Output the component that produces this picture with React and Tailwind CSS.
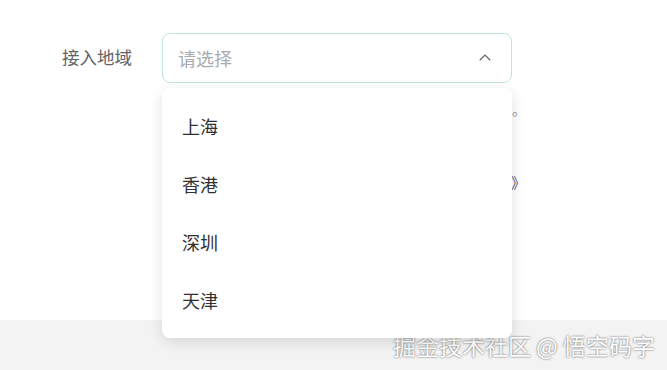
import { useState } from 'react';

const regions = ['上海', '香港', '深圳', '天津'];

function App() {
  const [open] = useState(true);

  return (
    <div
      className="relative flex h-[370px] w-[667px] flex-col overflow-hidden bg-white"
      style={{ fontFamily: '"Noto Sans CJK SC", "Liberation Sans", sans-serif' }}
    >
      {/* Form area */}
      <div className="flex-1 pt-[33px]">
        <div className="flex items-start">
          <label className="w-[132px] pt-[12px] text-right text-[17.5px] leading-[24px] text-[#606266]">
            接入地域
          </label>
          <div className="relative ml-[30px] w-[350px]">
            <div className="flex h-[50px] items-center justify-between rounded-[8px] border border-[#bfe6da] px-[15px]">
              <span className="text-[18px] text-[#a8abb2]">请选择</span>
              <svg className="mr-[2px] h-[18px] w-[18px] text-[#606266]" viewBox="0 0 24 24" fill="none" stroke="currentColor" strokeWidth={1.6}>
                <path d="M5 15l7-7 7 7" />
              </svg>
            </div>

            {/* Hidden content behind the menu */}
            <div className="mt-[16px] flex h-[20px] justify-end text-[14px] leading-[20px] text-[#909399]">
              <span className="-mr-[14px]">。</span>
            </div>
            <div className="mt-[52px] flex h-[24px] justify-end">
              <span className="-mr-[14px] text-[15px] leading-[24px] text-[#4a5a7a]">》</span>
            </div>

            {/* Dropdown menu */}
            {open && (
              <div className="absolute left-0 top-[55px] z-10 w-[350px] rounded-[8px] bg-white py-[9px] shadow-[0_4px_14px_rgba(0,0,0,0.12)]">
                {regions.map((r) => (
                  <div key={r} className="flex h-[58px] items-center px-[20px] text-[18px] text-[#303133]">
                    {r}
                  </div>
                ))}
              </div>
            )}
          </div>
        </div>
      </div>

      {/* Footer band */}
      <div className="flex h-[50px] items-center justify-end bg-[#f3f3f3] pr-[12px]">
        <span className="text-[23px] text-white [text-shadow:0_0_2px_rgba(0,0,0,0.7)]">
          掘金技术社区 @ 悟空码字
        </span>
      </div>
    </div>
  );
}

export default App;
